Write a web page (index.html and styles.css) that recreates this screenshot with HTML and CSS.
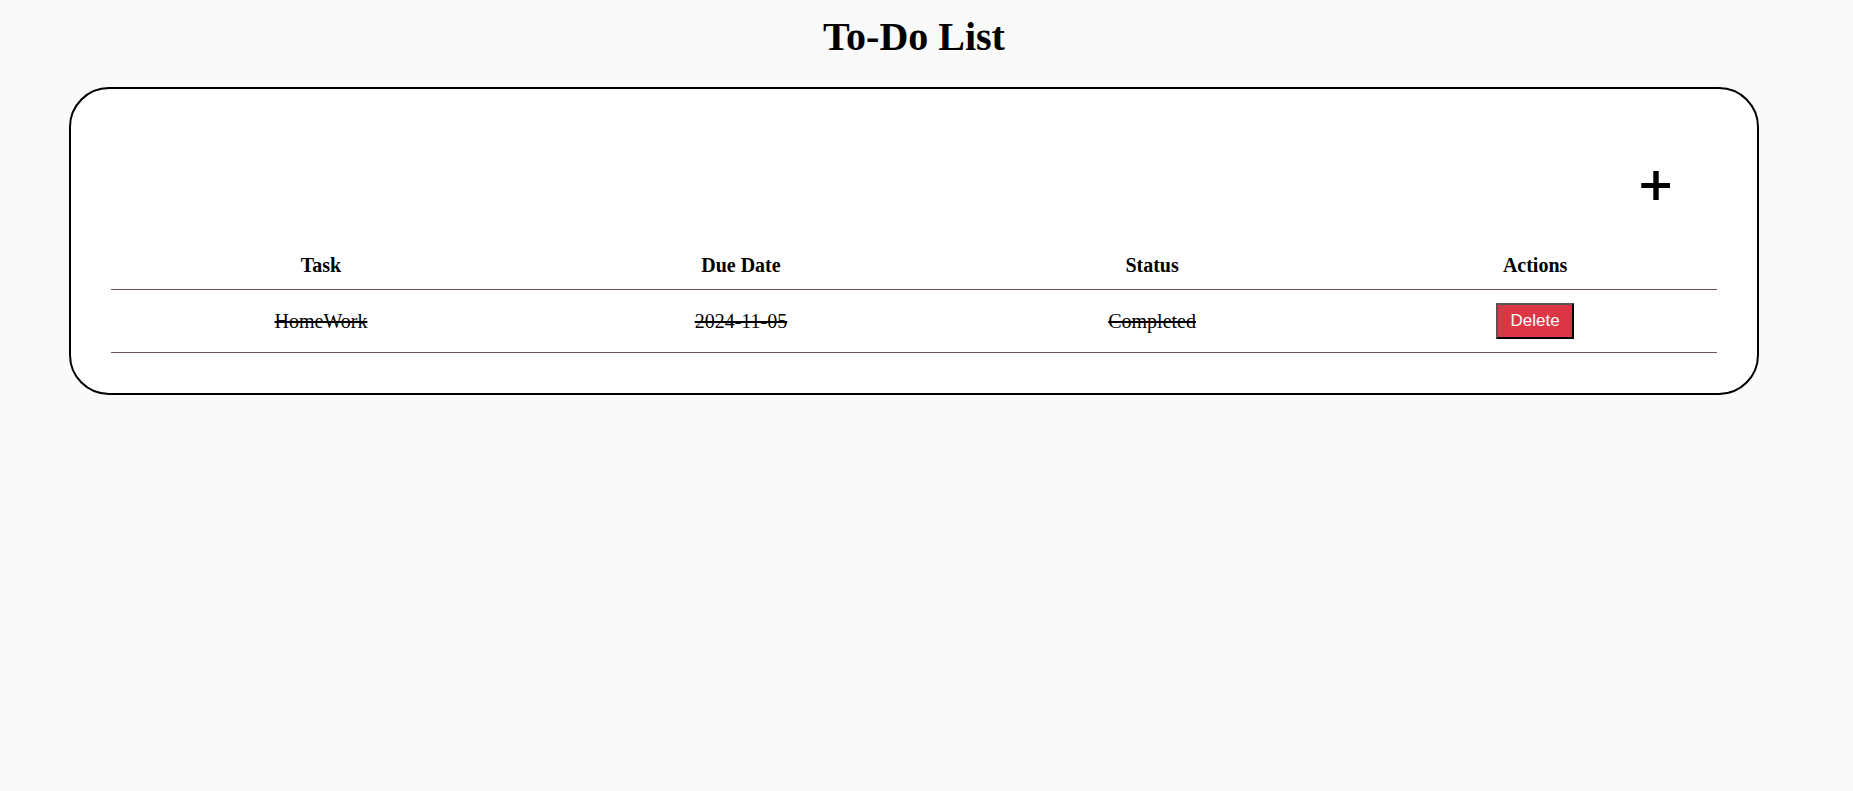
FILE: index.html
```html
<!DOCTYPE html>
<html lang="en">
<head>
<meta charset="utf-8">
<title>To-Do List</title>
<link rel="stylesheet" href="styles.css">
</head>
<body>
<main class="page">
  <h1 class="title">To-Do List</h1>
  <section class="card">
    <div class="toolbar">
      <button class="add" type="button" aria-label="Add task">
        <svg class="add-icon" viewBox="0 0 30 30" aria-hidden="true"><path d="M12.3 0h5.4v12h11.3v5h-11.3v12h-5.4v-12h-12v-5h12z"/></svg>
      </button>
    </div>
    <table class="tasks">
      <colgroup>
        <col class="col-task"><col class="col-date"><col class="col-status"><col>
      </colgroup>
      <thead>
        <tr><th>Task</th><th>Due Date</th><th>Status</th><th>Actions</th></tr>
      </thead>
      <tbody>
        <tr class="completed">
          <td>HomeWork</td><td>2024-11-05</td><td>Completed</td>
          <td><button class="delete" type="button">Delete</button></td>
        </tr>
      </tbody>
    </table>
  </section>
</main>
</body>
</html>
```

FILE: styles.css
```css
body {
  margin: 0;
  background: #fafafa;
  color: #000;
  font-family: "Liberation Serif", "Times New Roman", serif;
  font-size: 20px;
}

.page {
  padding: 14px 94px 0 69px;
}

.title {
  margin: 0 0 27px;
  font-size: 40px;
  line-height: 46px;
  text-align: center;
}

.card {
  padding: 40px;
  border: 2px solid #000;
  border-radius: 40px;
  background: #fff;
}

.toolbar {
  display: flex;
  justify-content: flex-end;
  padding: 32px 36px 31px 0;
}

.add {
  display: block;
  padding: 10px;
  border: 0;
  background: none;
  cursor: pointer;
}

.add-icon {
  display: block;
  width: 30px;
  height: 30px;
}

.tasks {
  width: 100%;
  border-collapse: collapse;
  text-align: center;
}

.col-task,
.col-date {
  width: 26.15%;
}

.col-status {
  width: 25.05%;
}

.tasks th,
.tasks td {
  padding: 12px;
  border-bottom: 1px solid #735256;
}

.tasks td {
  padding: 13px 12px;
}

.completed {
  text-decoration: line-through 2px;
}

.delete {
  display: inline-block;
  min-width: 78px;
  padding: 6px 12px;
  border: 2px outset #000;
  background: #dc3545;
  color: #fff;
  font-family: "Liberation Sans", Arial, sans-serif;
  font-size: 17px;
  line-height: 20px;
  vertical-align: middle;
  cursor: pointer;
}
```
